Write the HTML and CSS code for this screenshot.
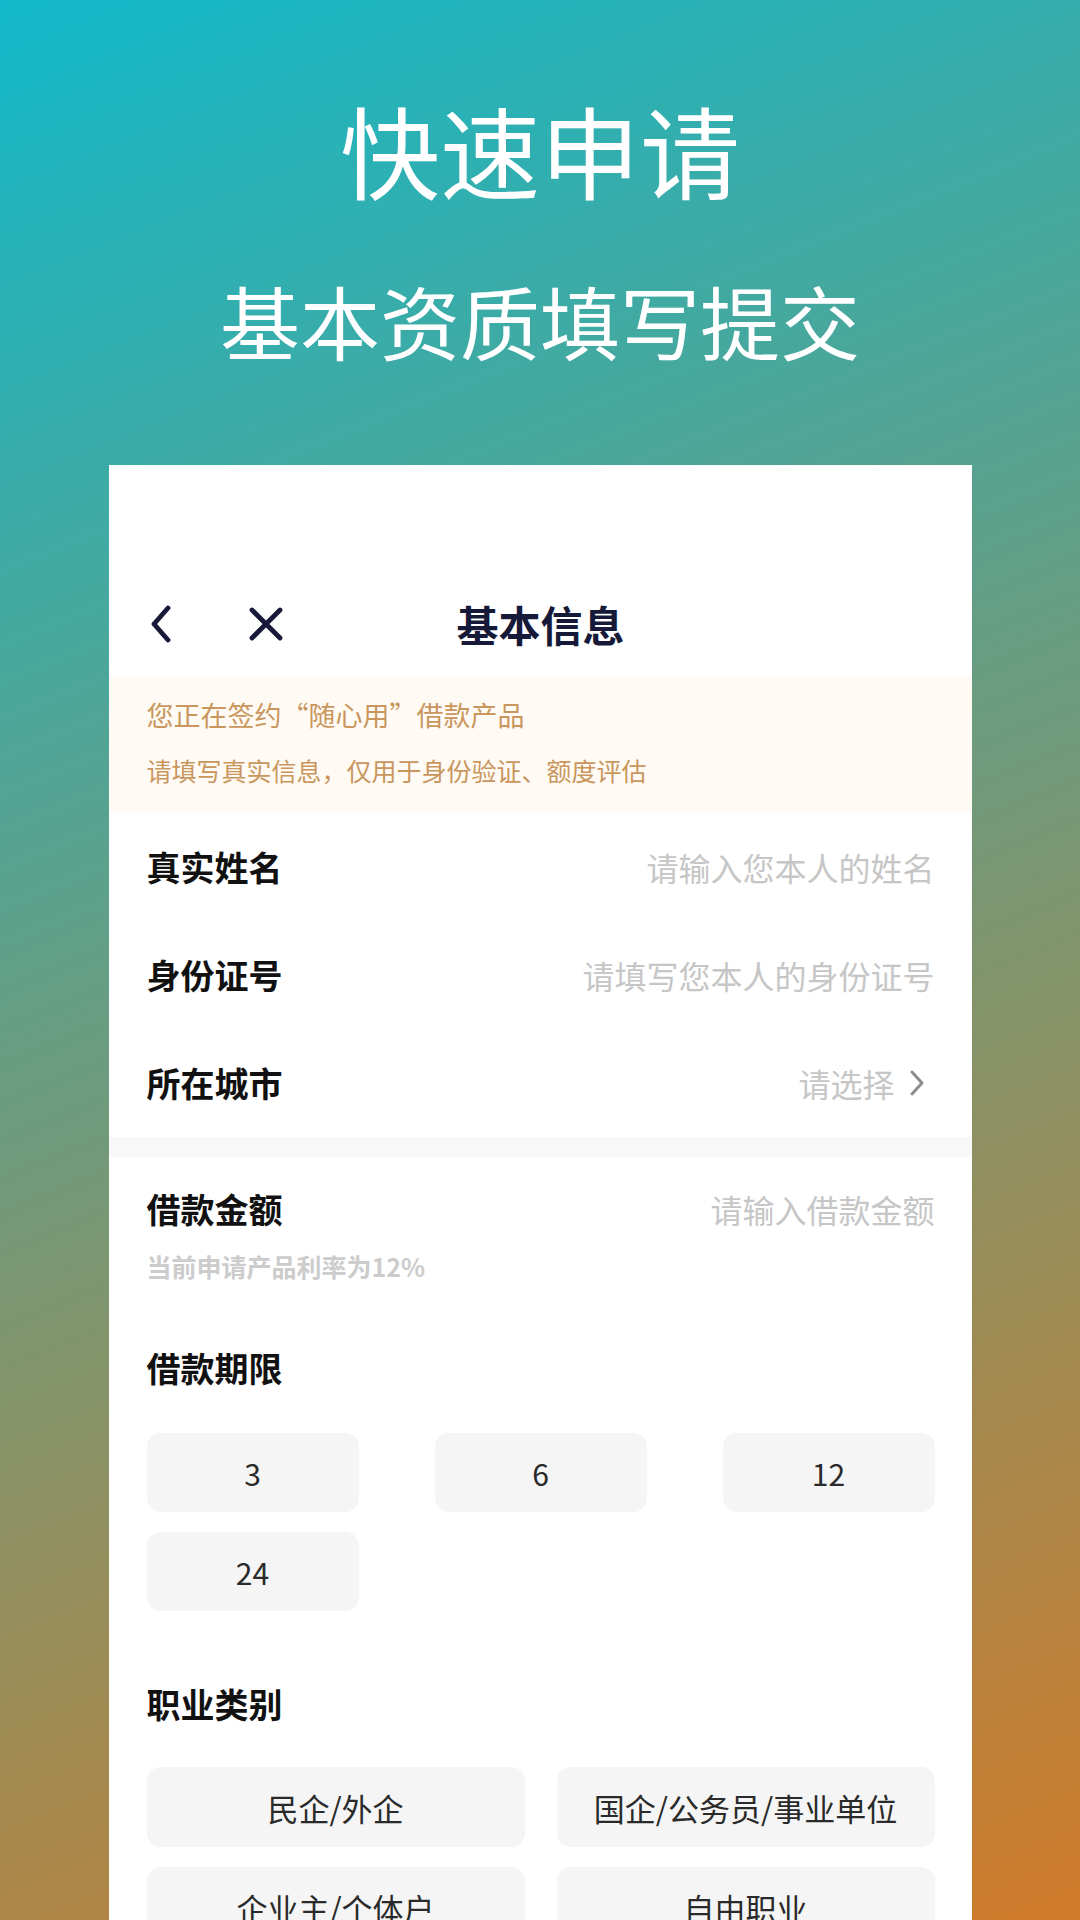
FILE: index.html
```html
<!DOCTYPE html>
<html lang="zh-CN">
<head>
<meta charset="utf-8">
<title>快速申请</title>
<link rel="stylesheet" href="styles.css">
</head>
<body>
<div class="page">
  <header class="hero">
    <h1 class="hero-title">快速申请</h1>
    <p class="hero-sub">基本资质填写提交</p>
  </header>

  <main class="card">
    <nav class="nav">
      <div class="nav-left">
        <svg class="icon-back" width="22" height="38" viewBox="0 0 22 38">
          <path d="M18 3 L4 19 L18 35" fill="none" stroke="#161a38" stroke-width="4.8" stroke-linecap="round" stroke-linejoin="round"/>
        </svg>
        <svg class="icon-close" width="36" height="36" viewBox="0 0 36 36">
          <path d="M4 4 L32 32 M32 4 L4 32" fill="none" stroke="#161a38" stroke-width="4.8" stroke-linecap="round"/>
        </svg>
      </div>
      <div class="nav-title">基本信息</div>
      <div class="nav-right"></div>
    </nav>

    <section class="notice">
      <p class="notice-main">您正在签约“随心用”借款产品</p>
      <p class="notice-sub">请填写真实信息，仅用于身份验证、额度评估</p>
    </section>

    <section class="group">
      <div class="row">
        <span class="label">真实姓名</span>
        <span class="placeholder">请输入您本人的姓名</span>
      </div>
      <div class="row">
        <span class="label">身份证号</span>
        <span class="placeholder">请填写您本人的身份证号</span>
      </div>
      <div class="row">
        <span class="label">所在城市</span>
        <span class="select">
          <span class="placeholder">请选择</span>
          <svg class="icon-more" width="20" height="30" viewBox="0 0 20 30">
            <path d="M5 4 L15 15 L5 26" fill="none" stroke="#8c8c8c" stroke-width="3" stroke-linecap="round" stroke-linejoin="round"/>
          </svg>
        </span>
      </div>
    </section>

    <div class="divider"></div>

    <section class="loan">
      <div class="line">
        <span class="label">借款金额</span>
        <span class="placeholder">请输入借款金额</span>
      </div>
      <p class="hint">当前申请产品利率为12%</p>

      <h2 class="label section-title">借款期限</h2>
      <div class="options three">
        <div class="opt">3</div>
        <div class="opt">6</div>
        <div class="opt">12</div>
        <div class="opt">24</div>
      </div>

      <h2 class="label section-title job-title">职业类别</h2>
      <div class="options two">
        <div class="opt">民企/外企</div>
        <div class="opt">国企/公务员/事业单位</div>
        <div class="opt">企业主/个体户</div>
        <div class="opt">自由职业</div>
      </div>
    </section>
  </main>
</div>
</body>
</html>
```

FILE: styles.css
```css
* {
  box-sizing: border-box;
}

html, body {
  margin: 0;
  padding: 0;
}

body {
  font-family: "Noto Sans CJK SC", "Noto Sans", sans-serif;
  width: 1080px;
  height: 1920px;
  overflow: hidden;
}

.page {
  width: 1080px;
  height: 1920px;
  overflow: hidden;
  background: linear-gradient(158deg, #12b9ca 0%, #d07a29 100%);
  display: flex;
  flex-direction: column;
  align-items: center;
}

.hero {
  padding-top: 99px;
  text-align: center;
  color: #ffffff;
}

.hero-title {
  margin: 0;
  font-size: 100px;
  line-height: 100px;
  font-weight: 400;
  letter-spacing: 0;
}

.hero-sub {
  margin: 80px 0 0;
  font-size: 80px;
  line-height: 80px;
  font-weight: 400;
}

.card {
  margin-top: 106px;
  width: 863px;
  flex: 1 0 auto;
  background: #ffffff;
  padding-top: 107px;
}

.nav {
  height: 104px;
  display: grid;
  grid-template-columns: 1fr auto 1fr;
  align-items: center;
  padding: 0 38px 0 43px;
}

.nav-left {
  display: flex;
  align-items: center;
  gap: 76px;
}

.icon-back {
  display: block;
  margin-left: -2px;
}

.icon-close {
  display: block;
}

.nav-title {
  font-size: 42px;
  font-weight: 700;
  color: #161a38;
  line-height: 1;
  margin-left: -4px;
}

.notice {
  background: #fffaf4;
  padding: 20px 38px 25px;
  color: #c9965d;
}

.notice p {
  margin: 0;
}

.notice-main {
  font-size: 27px;
  line-height: 38px;
}

.notice-sub {
  margin-top: 18px !important;
  font-size: 25px;
  line-height: 36px;
}

.group {
  padding: 0 37px 0 38px;
}

.row {
  height: 108px;
  display: flex;
  align-items: center;
  justify-content: space-between;
}

.label {
  font-size: 34px;
  font-weight: 700;
  color: #111111;
  line-height: 40px;
  margin: 0;
}

.placeholder {
  font-size: 32px;
  color: #c6c6c6;
  line-height: 40px;
}

.select {
  display: flex;
  align-items: center;
  gap: 12px;
}

.icon-more {
  display: block;
  margin-right: 8px;
}

.divider {
  height: 20px;
  background: #f8f8f8;
}

.loan {
  padding: 32px 37px 0 38px;
}

.line {
  display: flex;
  align-items: center;
  justify-content: space-between;
}

.hint {
  margin: 19px 0 0;
  font-size: 25px;
  line-height: 36px;
  font-weight: 700;
  color: #cccccc;
}

.section-title {
  margin-top: 64px;
}

.job-title {
  margin-top: 73px;
}

.options {
  display: grid;
  row-gap: 20px;
  margin-top: 45px;
}

.options.three {
  grid-template-columns: repeat(3, 212px);
  justify-content: space-between;
}

.options.two {
  margin-top: 43px;
  grid-template-columns: repeat(2, 378px);
  justify-content: space-between;
}

.opt {
  height: 79px;
  border-radius: 14px;
  background: #f5f5f5;
  display: flex;
  align-items: center;
  justify-content: center;
  font-size: 30px;
  color: #2a2a2a;
}

.options.two .opt {
  height: 80px;
  font-size: 31px;
}
```
